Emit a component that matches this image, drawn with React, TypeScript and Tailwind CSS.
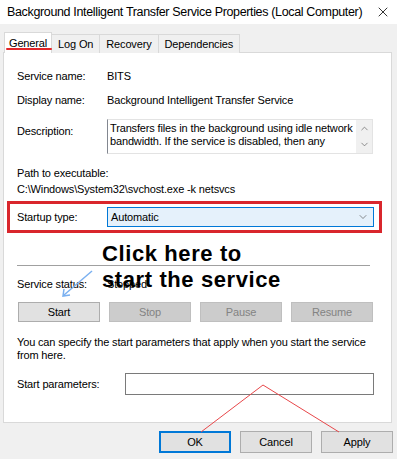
import { ChevronDown, ChevronUp, X } from "lucide-react";

const tabs = ["Log On", "Recovery", "Dependencies"];

const App = () => {
  return (
    <div className="relative w-[397px] h-[459px] overflow-hidden bg-[#f0f0f0] text-[11px] tracking-[-0.15px] text-black font-['Liberation_Sans',Arial,sans-serif]">
      {/* Заголовок окна */}
      <div className="h-[24px] bg-white flex items-center justify-between pl-[7px] pr-[6px]">
        <span className="text-[12.5px] tracking-[-0.35px] whitespace-nowrap">
          Background Intelligent Transfer Service Properties (Local Computer)
        </span>
        <X size={16} strokeWidth={1.2} className="text-black shrink-0" />
      </div>

      {/* Вкладки */}
      <div className="flex items-end pl-[4px] h-[29px] -mb-px">
        <div className="relative h-[21px] px-[4px] bg-white border border-b-0 border-[#d9d9d9] flex items-center z-10">
          General
          <div className="absolute left-[1px] top-[15px] w-[46px] h-[2px] rounded-full bg-[#e2272a]" />
        </div>
        {tabs.map((tab) => (
          <div
            key={tab}
            className="h-[19px] px-[6px] bg-[#f0f0f0] border border-l-0 border-b-0 border-[#d9d9d9] flex items-center"
          >
            {tab}
          </div>
        ))}
      </div>

      {/* Панель General */}
      <div className="ml-[3px] w-[389px] h-[371px] bg-white border border-[#d9d9d9] flex flex-col">
        <div className="mt-[15px] ml-[13px] flex h-[16px] items-center">
          <span className="w-[90px]">Service name:</span>
          <span>BITS</span>
        </div>
        <div className="mt-[8px] ml-[13px] flex h-[16px] items-center">
          <span className="w-[90px]">Display name:</span>
          <span>Background Intelligent Transfer Service</span>
        </div>
        <div className="mt-[11px] ml-[13px] flex">
          <span className="w-[90px] pt-[4px]">Description:</span>
          <div className="w-[266px] h-[35px] border border-[#e3e3e3] border-l-[#828790] flex">
            <div className="flex-1 pl-[2px] pt-[2px] leading-[13px] overflow-hidden whitespace-nowrap">
              Transfers files in the background using idle network
              <br />
              bandwidth. If the service is disabled, then any
            </div>
            <div className="w-[16px] bg-[#f0f0f0] flex flex-col items-center justify-between py-[3px] text-[#606060]">
              <ChevronUp size={11} strokeWidth={1.5} />
              <ChevronDown size={11} strokeWidth={1.5} />
            </div>
          </div>
        </div>
        <div className="mt-[11px] ml-[13px] h-[16px] flex items-center">Path to executable:</div>
        <div className="ml-[13px] h-[16px] flex items-center">C:\Windows\System32\svchost.exe -k netsvcs</div>

        {/* Тип запуска */}
        <div className="mt-[4px] ml-[3px] w-[375px] h-[32px] border-[3px] border-[#d9262c] flex items-center pl-[7px]">
          <span className="w-[90px]">Startup type:</span>
          <div className="w-[267px] h-[20px] border border-[#0078d7] bg-[#e5f1fb] flex items-center justify-between pl-[3px] pr-[4px]">
            <span>Automatic</span>
            <ChevronDown size={12} strokeWidth={1.3} className="text-[#505050]" />
          </div>
        </div>

        <div className="mt-[32px] ml-[13px] w-[353px] h-px bg-[#a0a0a0]" />

        <div className="mt-[10px] ml-[13px] flex h-[16px] items-center">
          <span className="w-[90px]">Service status:</span>
          <span>Stopped</span>
        </div>

        <div className="mt-[10px] ml-[14px] flex gap-[9px]">
          <button className="w-[82px] h-[20px] bg-[#e1e1e1] border border-[#adadad]">Start</button>
          <button className="w-[82px] h-[20px] bg-[#cccccc] border border-[#bfbfbf] text-[#838383]">Stop</button>
          <button className="w-[82px] h-[20px] bg-[#cccccc] border border-[#bfbfbf] text-[#838383]">Pause</button>
          <button className="w-[82px] h-[20px] bg-[#cccccc] border border-[#bfbfbf] text-[#838383]">Resume</button>
        </div>

        <div className="mt-[14px] ml-[13px] leading-[13px] whitespace-nowrap">
          You can specify the start parameters that apply when you start the service
          <br />
          from here.
        </div>

        <div className="mt-[11px] ml-[13px] flex items-center">
          <span className="w-[108px]">Start parameters:</span>
          <div className="w-[249px] h-[22px] border border-[#7a7a7a] bg-white" />
        </div>
      </div>

      {/* Кнопки диалога */}
      <div className="mt-[8px] flex justify-end gap-[9px] pr-[4px]">
        <button className="w-[72px] h-[22px] bg-[#e1e1e1] border-2 border-[#0078d7]">OK</button>
        <button className="w-[72px] h-[22px] bg-[#e1e1e1] border border-[#adadad]">Cancel</button>
        <button className="w-[72px] h-[22px] bg-[#e1e1e1] border border-[#adadad]">Apply</button>
      </div>

      {/* Аннотации поверх окна */}
      <div className="absolute left-[102px] top-[241px] text-[22px] font-bold leading-[26px] tracking-[0.6px] whitespace-nowrap pointer-events-none">
        Click here to
        <br />
        start the service
      </div>
      <svg className="absolute inset-0 pointer-events-none" width={397} height={459}>
        <polyline points="201,432 263,385 339,432" fill="none" stroke="#e8474a" strokeWidth={1} />
        <line x1={92} y1={271} x2={64} y2={295} stroke="#7ab0f0" strokeWidth={1.5} />
        <polyline points="64,289 63,296 70,295" fill="none" stroke="#7ab0f0" strokeWidth={1.5} />
      </svg>
    </div>
  );
};

export default App;
